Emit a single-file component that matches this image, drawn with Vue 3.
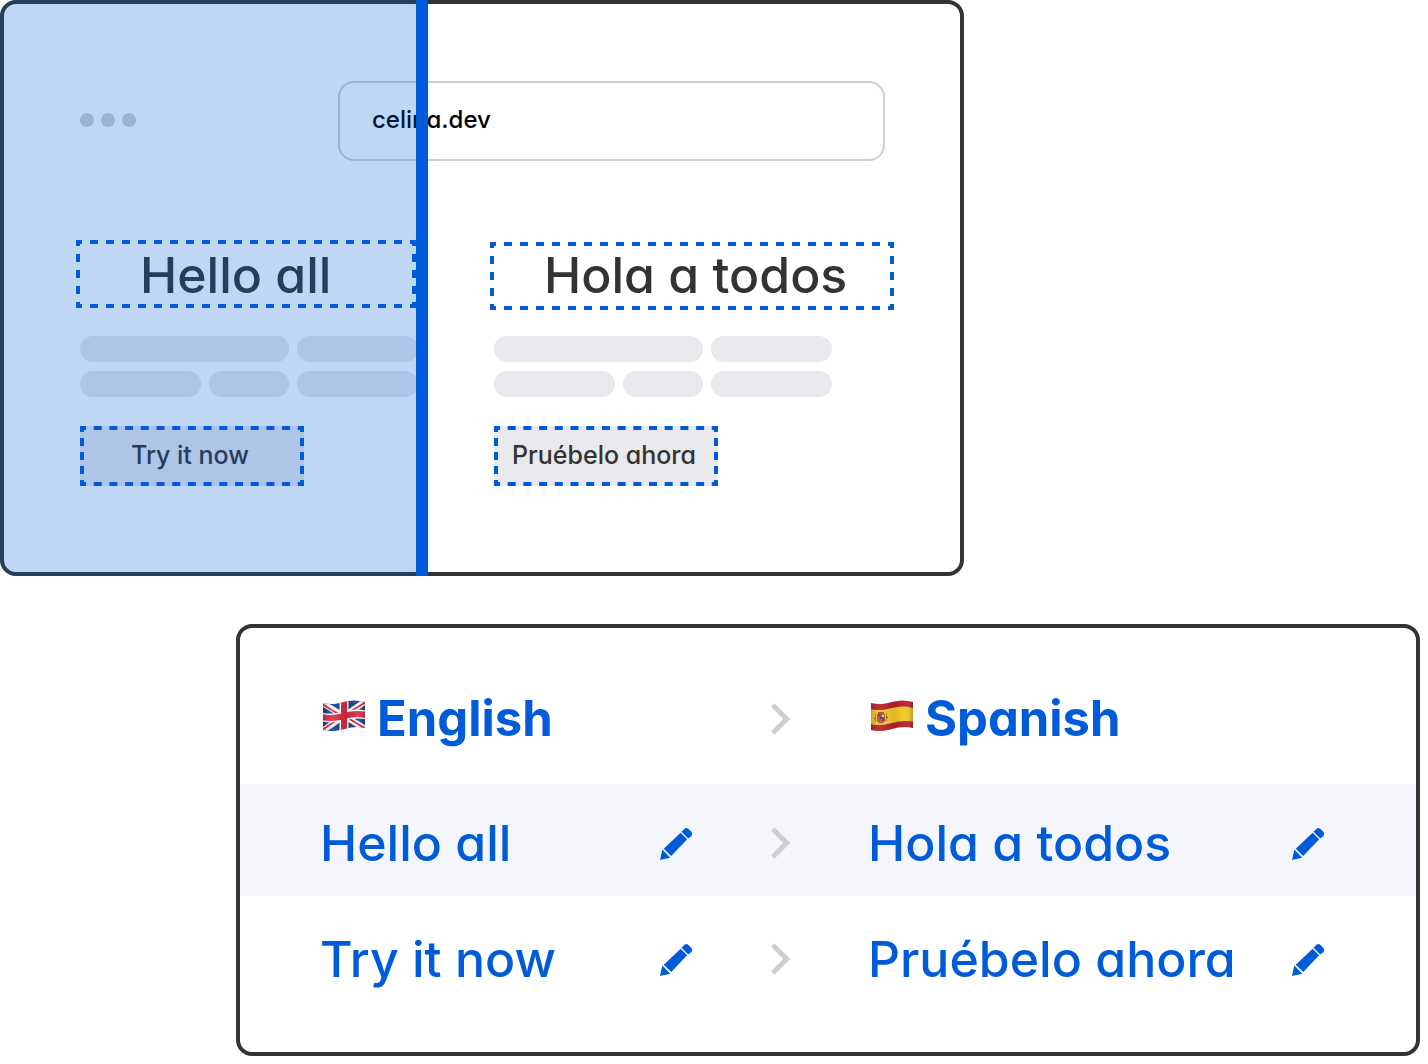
<script setup>
import { ref } from 'vue'

const address = ref('celina.dev')

const panes = [
  { lang: 'en', title: 'Hello all', action: 'Try it now' },
  { lang: 'es', title: 'Hola a todos', action: 'Pruébelo ahora' }
]

const translations = ref([
  { id: 1, source: 'Hello all', target: 'Hola a todos' },
  { id: 2, source: 'Try it now', target: 'Pruébelo ahora' }
])

const titleDash = { h: '8 8', v: '8 8' }
const actionDash = { h: '8 7.7', v: '8 6' }
</script>

<template>
  <main class="page">
    <section class="browser">
      <div class="window">
        <div class="bar">
          <div class="dots"><i></i><i></i><i></i></div>
          <input v-model="address" class="address" type="text" aria-label="Address" />
        </div>
        <div class="panes">
          <article v-for="p in panes" :key="p.lang" :class="['pane', p.lang]" :lang="p.lang">
            <h1 class="title">
              <svg class="outline" aria-hidden="true">
                <line x1="0" y1="2" x2="100%" y2="2" :stroke-dasharray="titleDash.h" />
                <line class="far-y" x1="0" y1="100%" x2="100%" y2="100%" :stroke-dasharray="titleDash.h" />
                <line x1="2" y1="0" x2="2" y2="100%" :stroke-dasharray="titleDash.v" />
                <line class="far-x" x1="100%" y1="0" x2="100%" y2="100%" :stroke-dasharray="titleDash.v" />
              </svg>
              {{ p.title }}
            </h1>
            <div class="skeleton">
              <span class="long"></span><span class="mid"></span>
              <span class="mid"></span><span class="short"></span><span class="mid"></span>
            </div>
            <button class="action" type="button">
              <svg class="outline" aria-hidden="true">
                <line x1="0" y1="2" x2="100%" y2="2" :stroke-dasharray="actionDash.h" />
                <line class="far-y" x1="0" y1="100%" x2="100%" y2="100%" :stroke-dasharray="actionDash.h" />
                <line x1="2" y1="0" x2="2" y2="100%" :stroke-dasharray="actionDash.v" />
                <line class="far-x" x1="100%" y1="0" x2="100%" y2="100%" :stroke-dasharray="actionDash.v" />
              </svg>
              {{ p.action }}
            </button>
          </article>
        </div>
      </div>
      <div class="shade"></div>
    </section>

    <section class="card">
      <table class="table">
        <colgroup>
          <col class="c-source" /><col class="c-edit" /><col class="c-arrow" /><col class="c-target" /><col />
        </colgroup>
        <thead>
          <tr>
            <th scope="col" colspan="2">
              <span class="lang">
                <svg class="flag" viewBox="0 0 44 32" aria-hidden="true">
                  <defs>
                    <clipPath id="wave-en"><path d="M1 3C8 5 15 4 22 2S36 0 43 2V28C36 26 29 27 22 29S8 32 1 30Z" /></clipPath>
                    <linearGradient id="shine-en">
                      <stop offset="0" stop-color="#000" stop-opacity=".22" />
                      <stop offset=".25" stop-color="#fff" stop-opacity=".12" />
                      <stop offset=".55" stop-color="#000" stop-opacity=".1" />
                      <stop offset=".8" stop-color="#fff" stop-opacity=".1" />
                      <stop offset="1" stop-color="#000" stop-opacity=".25" />
                    </linearGradient>
                  </defs>
                  <g clip-path="url(#wave-en)">
                    <path fill="#153f8c" d="M0 0h44v32H0z" />
                    <path stroke="#fff" stroke-width="6" d="M0 3L44 29M0 31L44 1" />
                    <path stroke="#d8283f" stroke-width="2" d="M0 4L18 15M26 18L44 29M0 30L18 18M26 13L44 2" />
                    <path fill="none" stroke="#fff" stroke-width="9" d="M0 17C8 19 15 18 22 16S36 13 44 15M22 0V32" />
                    <path fill="none" stroke="#d8283f" stroke-width="6" d="M0 17C8 19 15 18 22 16S36 13 44 15M22 0V32" />
                    <path fill="url(#shine-en)" d="M0 0h44v32H0z" />
                  </g>
                </svg>
                English
              </span>
            </th>
            <th class="arrow">
              <svg class="chevron" viewBox="0 0 20 32" aria-hidden="true"><path d="M3.4 0.3L19.3 16L3.4 31.7L0 28.3L12.3 16L0 3.7Z" /></svg>
            </th>
            <th scope="col" colspan="2">
              <span class="lang">
                <svg class="flag" viewBox="0 0 44 32" aria-hidden="true">
                  <defs>
                    <clipPath id="wave-es"><path d="M1 3C8 5 15 4 22 2S36 0 43 2V28C36 26 29 27 22 29S8 32 1 30Z" /></clipPath>
                    <linearGradient id="shine-es">
                      <stop offset="0" stop-color="#000" stop-opacity=".22" />
                      <stop offset=".25" stop-color="#fff" stop-opacity=".08" />
                      <stop offset=".55" stop-color="#000" stop-opacity=".08" />
                      <stop offset=".8" stop-color="#fff" stop-opacity=".05" />
                      <stop offset="1" stop-color="#000" stop-opacity=".28" />
                    </linearGradient>
                  </defs>
                  <g clip-path="url(#wave-es)">
                    <path fill="#b61f2c" d="M0 0h44v32H0z" />
                    <path fill="#f4c724" d="M0 9C8 11 15 10 22 8S36 6 44 8V22C36 20 29 21 22 23S8 26 0 24Z" />
                    <path fill="#a8583a" d="M7 14h8v7q-4 5-8 0z" />
                    <path fill="#8d5b2a" d="M8 12h6v2H8z" />
                    <path fill="#b98524" d="M5 14h1v9H5zM16 13h1v9h-1z" />
                    <path fill="#b62b33" d="M8 14h3v3H8zM12 18h3v3h-3zM4 18h2v1H4zM16 17h2v1h-2z" />
                    <path fill="#e7d7bd" d="M12 15h2v2h-2zM5 22h2v1H5zM15 22h2v1h-2z" />
                    <path fill="#4b3d5c" d="M10 17h3v2h-3z" />
                    <path fill="url(#shine-es)" d="M0 0h44v32H0z" />
                  </g>
                </svg>
                Spanish
              </span>
            </th>
          </tr>
        </thead>
        <tbody>
          <tr v-for="t in translations" :key="t.id">
            <td>{{ t.source }}</td>
            <td>
              <button class="edit" type="button" :aria-label="`Edit ${t.source}`">
                <svg viewBox="0 0 32 32" aria-hidden="true">
                  <path d="M0 32L2.3 21.6L10.3 29.8ZM3.8 20.8L20.6 4.7L27.2 11.3L11.2 27.9Z" />
                  <path d="M21.5 3.7L24 1.2Q26.200-1.100 28.700 1.200L31 3.600Q33.200 6.200 31 8.400L28.200 10.500Z" />
                </svg>
              </button>
            </td>
            <td class="arrow">
              <svg class="chevron" viewBox="0 0 20 32" aria-hidden="true"><path d="M3.4 0.3L19.3 16L3.4 31.7L0 28.3L12.3 16L0 3.7Z" /></svg>
            </td>
            <td>{{ t.target }}</td>
            <td>
              <button class="edit" type="button" :aria-label="`Edit ${t.target}`">
                <svg viewBox="0 0 32 32" aria-hidden="true">
                  <path d="M0 32L2.3 21.6L10.3 29.8ZM3.8 20.8L20.6 4.7L27.2 11.3L11.2 27.9Z" />
                  <path d="M21.5 3.7L24 1.2Q26.200-1.100 28.700 1.200L31 3.600Q33.200 6.200 31 8.400L28.200 10.500Z" />
                </svg>
              </button>
            </td>
          </tr>
        </tbody>
      </table>
    </section>
  </main>
</template>

<style>
body { background:#fff; }
</style>

<style scoped>
.page, .page * { box-sizing:border-box; }
.page { display:grid; grid-template-columns:236fr 728fr 456fr; row-gap:48px; padding:0 8px 8px 0; font-family:Inter, "Open Sans", sans-serif; font-weight:500; font-feature-settings:"cv11"; color:#333; }

.browser { grid-column:1 / 3; position:relative; }
.window { border:4px solid #333; border-radius:16px; padding:77px 0 86px; }
.shade { position:absolute; top:0; bottom:0; left:0; width:44.4%; border-right:12px solid #005bd8; border-radius:16px 0 0 16px; background:rgba(0, 91, 216, .25); background-clip:padding-box; pointer-events:none; }

.bar { display:flex; align-items:center; padding:0 75px 0 76px; }
.dots { display:flex; gap:7px; width:258px; flex:none; padding-bottom:2px; }
.dots i { width:14px; height:14px; border-radius:50%; background:#cfcfcf; }
.address { flex:1; min-width:0; height:80px; padding:0 32px 4px; border:2px solid #cfcfcf; border-radius:16px; background:#fff; color:#000; font:inherit; font-size:24px; font-feature-settings:inherit; }

.panes { display:grid; grid-template-columns:414fr 470fr; padding:79px 0 0 72px; }
.title { position:relative; width:340px; height:68px; margin:0 0 28px; padding-left:64px; font-size:50px; font-weight:500; line-height:70px; white-space:nowrap; }
.es .title { width:404px; margin:2px 0 26px; padding-left:54px; line-height:66px; }
.outline { position:absolute; top:0; left:0; width:100%; height:100%; fill:none; stroke:#005bd8; stroke-width:4; stroke-dashoffset:2; }
.far-y { transform:translateY(-2px); }
.far-x { transform:translateX(-2px); }

.skeleton { display:flex; flex-wrap:wrap; gap:9px 8px; width:338px; margin:0 0 29px 4px; }
.skeleton span { height:26px; border-radius:13px; background:#e8e8ed; }
.skeleton .long { width:209px; }
.skeleton .mid { width:121px; }
.skeleton .short { width:80px; }

.action { position:relative; display:block; width:224px; height:60px; margin-left:4px; padding:0 4px 2px 0; border:0; background:#e8e8ed; color:#333; font:inherit; font-size:25px; font-feature-settings:inherit; cursor:pointer; }

.card { grid-column:2 / 4; border:4px solid #333; border-radius:16px; overflow:hidden; }
.table { width:100%; table-layout:fixed; border-collapse:collapse; color:#005bd8; font-size:50px; line-height:72px; white-space:nowrap; }
.c-source { width:35.7%; }
.c-edit { width:9.4%; }
.c-arrow { width:8.3%; }
.c-target { width:36.1%; }
.table th, .table td { padding:23px 0 17px; text-align:left; vertical-align:top; }
.table th { padding:55px 0 29px; font-size:49px; font-weight:700; }
.table th:first-child, .table td:first-child { padding-left:80px; }
.table tbody tr:first-child { background:#f5f6fb; }
.table tbody tr:last-child td { padding-top:27px; padding-bottom:57px; }
.lang { display:flex; align-items:center; gap:10px; }
.flag { width:46px; height:32px; margin:0 0 6px 1px; }
.chevron { display:block; width:20px; height:32px; margin:20px 0 20px 1px; fill:#cccecf; }
.edit { display:block; width:32px; height:32px; margin:21px 0 19px; padding:0; border:0; background:none; cursor:pointer; }
.edit svg { display:block; width:32px; height:32px; fill:#005bd8; }
</style>
